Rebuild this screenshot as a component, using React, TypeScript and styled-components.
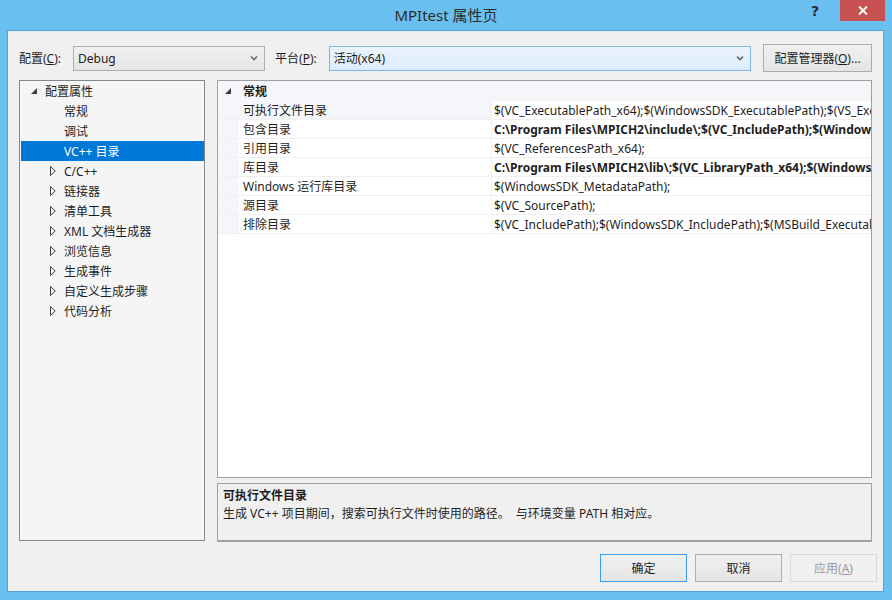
import React from "react";
import styled, { createGlobalStyle } from "styled-components";

const Global = createGlobalStyle`
  html, body { margin: 0; padding: 0; }
  body { background: #69c0f0; font-family: "Noto Sans", "Noto Sans CJK SC", sans-serif; }
  * { box-sizing: border-box; }
`;

const UI = `"Noto Sans", "Noto Sans CJK SC", sans-serif`;

const Window = styled.div`
  width: 892px;
  height: 600px;
  overflow: hidden;
  background: #69c0f0;
  display: flex;
  flex-direction: column;
  font-family: ${UI};
  font-size: 12px;
  color: #1e1e1e;
`;

const TitleBar = styled.div`
  height: 30px;
  display: grid;
  grid-template-columns: 1fr auto 1fr;
  align-items: start;
`;

const Title = styled.div`
  font-size: 15px;
  line-height: 30px;
  color: #2b2b2b;
`;

const Controls = styled.div`
  display: flex;
  justify-content: flex-end;
  align-items: flex-start;
  padding-right: 7px;
`;

const HelpBtn = styled.div`
  width: 22px;
  height: 21px;
  margin-right: 14px;
  font-family: "DejaVu Sans", sans-serif;
  font-weight: bold;
  font-size: 14px;
  line-height: 23px;
  text-align: center;
  color: #2b2b2b;
`;

const CloseBtn = styled.div`
  width: 45px;
  height: 21px;
  background: #c75050;
  display: flex;
  align-items: center;
  justify-content: center;
`;

const Body = styled.div`
  flex: 1;
  min-width: 0;
  margin: 0 8px 8px 7px;
  border: 1px solid #4fa3d6;
  background: #f0f0f0;
  display: flex;
  flex-direction: column;
`;

const TopRow = styled.div`
  display: flex;
  align-items: center;
  height: 28px;
  margin: 13px 11px 0 11px;
`;

const Label = styled.span<{ $gap?: number }>`
  white-space: nowrap;
  margin-left: ${(p) => p.$gap ?? 0}px;
  margin-right: 12px;
`;

const Combo = styled.div<{ $active?: boolean; $width?: number }>`
  height: 25px;
  ${(p) => (p.$width ? `width: ${p.$width}px; flex-shrink: 0;` : "flex: 1; min-width: 0;")}
  border: 1px solid ${(p) => (p.$active ? "#7eb4ea" : "#acacac")};
  background: ${(p) =>
    p.$active
      ? "linear-gradient(#ecf4fc, #dcecfc)"
      : "linear-gradient(#f0f0f0, #e5e5e5)"};
  display: flex;
  align-items: center;
  justify-content: space-between;
  padding: 0 6px 0 4px;
  font-size: 12px;
`;

const Button = styled.div<{ $variant?: "default" | "normal" | "disabled"; $width?: number; $offset?: number }>`
  height: 28px;
  width: ${(p) => p.$width ?? 87}px;
  flex-shrink: 0;
  margin-left: ${(p) => p.$offset ?? 0}px;
  border: 1px solid
    ${(p) =>
      p.$variant === "default"
        ? "#3c9cf0"
        : p.$variant === "disabled"
        ? "#d9d9d9"
        : "#acacac"};
  background: ${(p) =>
    p.$variant === "disabled" ? "#f0f0f0" : "linear-gradient(#f0f0f0, #e5e5e5)"};
  color: ${(p) => (p.$variant === "disabled" ? "#9a9a9a" : "#1e1e1e")};
  display: flex;
  align-items: center;
  justify-content: center;
  white-space: nowrap;
`;

const Main = styled.div`
  display: flex;
  margin: 8px 11px 0 11px;
  height: 462px;
  min-width: 0;
`;

const TreePanel = styled.div`
  width: 186px;
  flex-shrink: 0;
  height: 461px;
  border: 1px solid #828790;
  background: #f5f5f5;
  display: flex;
  flex-direction: column;
`;

const TreeRow = styled.div<{ $indent: number; $selected?: boolean }>`
  height: 20px;
  margin-left: 1px;
  display: flex;
  align-items: center;
  padding-left: ${(p) => p.$indent}px;
  background: ${(p) => (p.$selected ? "#0078d7" : "transparent")};
  color: ${(p) => (p.$selected ? "#ffffff" : "#1e1e1e")};
  white-space: nowrap;
`;

const Glyph = styled.span`
  width: 14px;
  display: inline-flex;
  align-items: center;
  justify-content: flex-start;
`;

const RightCol = styled.div`
  flex: 1;
  min-width: 0;
  margin-left: 12px;
  display: flex;
  flex-direction: column;
  gap: 5px;
`;

const Grid = styled.div`
  height: 398px;
  border: 1px solid #a0a0a0;
  background: #ffffff;
  overflow: hidden;
  display: flex;
  flex-direction: column;
`;

const CategoryRow = styled.div`
  height: 20px;
  display: flex;
  align-items: center;
  background: #f4f6f9;
  font-weight: bold;
  border-bottom: 1px solid #f4f6f9;
`;

const Gutter = styled.div`
  width: 21px;
  align-self: stretch;
  background: #f4f6f9;
  display: flex;
  align-items: center;
  padding-left: 7px;
  flex-shrink: 0;
`;

const CategoryName = styled.span`
  padding-left: 4px;
`;

const PropRow = styled.div`
  height: 19px;
  display: flex;
  border-bottom: 1px solid #f0f0f0;
`;

const NameCell = styled.div<{ $selected?: boolean }>`
  width: 253px;
  flex-shrink: 0;
  padding-left: 4px;
  display: flex;
  align-items: center;
  background: ${(p) => (p.$selected ? "#f4f6f9" : "#ffffff")};
  border-right: 1px solid #f0f0f0;
  white-space: nowrap;
`;

const ValueCell = styled.div<{ $bold?: boolean }>`
  flex: 1;
  min-width: 0;
  padding-left: 2px;
  display: flex;
  align-items: center;
  white-space: nowrap;
  overflow: hidden;
  font-weight: ${(p) => (p.$bold ? "bold" : "normal")};
`;

const GridFill = styled.div`
  flex: 1;
  background: #ffffff;
`;

const Desc = styled.div`
  height: 59px;
  border: 1px solid #a0a0a0;
  border-bottom-width: 2px;
  background: #f0f0f0;
  padding: 3px 5px;
  display: flex;
  flex-direction: column;
`;

const DescTitle = styled.div`
  font-weight: bold;
  line-height: 18px;
`;

const DescText = styled.div`
  line-height: 18px;
  white-space: pre;
`;

const ButtonRow = styled.div`
  display: flex;
  justify-content: flex-end;
  gap: 8px;
  margin: 12px 6px 0 0;
`;

const Chevron = () => (
  <svg width="8" height="6" viewBox="0 0 8 6">
    <path d="M1 1.5 L4 4.5 L7 1.5" fill="none" stroke="#6a6a6a" strokeWidth="1.6" />
  </svg>
);

const Expanded = () => (
  <svg width="6" height="6" viewBox="0 0 6 6">
    <polygon points="6,0 6,6 0,6" fill="#404040" />
  </svg>
);

const Collapsed = () => (
  <svg width="6" height="10" viewBox="0 0 6 10">
    <polygon points="0.5,0.5 5.2,5 0.5,9.5" fill="none" stroke="#404040" strokeWidth="1" />
  </svg>
);

const treeItems: { text: string; level: number; kind: "exp" | "col" | "leaf"; selected?: boolean }[] = [
  { text: "配置属性", level: 0, kind: "exp" },
  { text: "常规", level: 1, kind: "leaf" },
  { text: "调试", level: 1, kind: "leaf" },
  { text: "VC++ 目录", level: 1, kind: "leaf", selected: true },
  { text: "C/C++", level: 1, kind: "col" },
  { text: "链接器", level: 1, kind: "col" },
  { text: "清单工具", level: 1, kind: "col" },
  { text: "XML 文档生成器", level: 1, kind: "col" },
  { text: "浏览信息", level: 1, kind: "col" },
  { text: "生成事件", level: 1, kind: "col" },
  { text: "自定义生成步骤", level: 1, kind: "col" },
  { text: "代码分析", level: 1, kind: "col" },
];

const props: { name: string; value: string; bold?: boolean; selected?: boolean }[] = [
  {
    name: "可执行文件目录",
    value: "$(VC_ExecutablePath_x64);$(WindowsSDK_ExecutablePath);$(VS_ExecutablePath);$(MSBuild_ExecutablePath);$(SystemRoot)",
    selected: true,
  },
  {
    name: "包含目录",
    value: "C:\\Program Files\\MPICH2\\include\\;$(VC_IncludePath);$(WindowsSDK_IncludePath);",
    bold: true,
  },
  { name: "引用目录", value: "$(VC_ReferencesPath_x64);" },
  {
    name: "库目录",
    value: "C:\\Program Files\\MPICH2\\lib\\;$(VC_LibraryPath_x64);$(WindowsSDK_LibraryPath_x64);",
    bold: true,
  },
  { name: "Windows 运行库目录", value: "$(WindowsSDK_MetadataPath);" },
  { name: "源目录", value: "$(VC_SourcePath);" },
  {
    name: "排除目录",
    value: "$(VC_IncludePath);$(WindowsSDK_IncludePath);$(MSBuild_ExecutablePath);$(VC_LibraryPath_x64);",
  },
];

export default function App() {
  return (
    <>
      <Global />
      <Window>
        <TitleBar>
          <div />
          <Title>MPItest 属性页</Title>
          <Controls>
            <HelpBtn>?</HelpBtn>
            <CloseBtn>
              <svg width="10" height="9" viewBox="0 0 10 9">
                <path d="M1 0.5 L9 8.5 M9 0.5 L1 8.5" stroke="#ffffff" strokeWidth="2" />
              </svg>
            </CloseBtn>
          </Controls>
        </TitleBar>
        <Body>
          <TopRow>
            <Label>
              配置(<u>C</u>):
            </Label>
            <Combo $width={192}>
              <span>Debug</span>
              <Chevron />
            </Combo>
            <Label $gap={10}>
              平台(<u>P</u>):
            </Label>
            <Combo $active>
              <span>活动(x64)</span>
              <Chevron />
            </Combo>
            <Button $width={109} $offset={12}>
              配置管理器(<u>O</u>)...
            </Button>
          </TopRow>
          <Main>
            <TreePanel>
              {treeItems.map((it) => (
                <TreeRow
                  key={it.text}
                  $indent={it.level === 0 ? 10 : it.kind === "leaf" ? 43 : 29}
                  $selected={it.selected}
                >
                  {it.kind !== "leaf" && (
                    <Glyph>{it.kind === "exp" ? <Expanded /> : <Collapsed />}</Glyph>
                  )}
                  <span>{it.text}</span>
                </TreeRow>
              ))}
            </TreePanel>
            <RightCol>
              <Grid>
                <CategoryRow>
                  <Gutter>
                    <Expanded />
                  </Gutter>
                  <CategoryName>常规</CategoryName>
                </CategoryRow>
                {props.map((p) => (
                  <PropRow key={p.name}>
                    <Gutter />
                    <NameCell $selected={p.selected}>{p.name}</NameCell>
                    <ValueCell $bold={p.bold}>{p.value}</ValueCell>
                  </PropRow>
                ))}
                <GridFill />
              </Grid>
              <Desc>
                <DescTitle>可执行文件目录</DescTitle>
                <DescText>{"生成 VC++ 项目期间，搜索可执行文件时使用的路径。  与环境变量 PATH 相对应。"}</DescText>
              </Desc>
            </RightCol>
          </Main>
          <ButtonRow>
            <Button $variant="default">确定</Button>
            <Button>取消</Button>
            <Button $variant="disabled">
              应用(<u>A</u>)
            </Button>
          </ButtonRow>
        </Body>
      </Window>
    </>
  );
}
